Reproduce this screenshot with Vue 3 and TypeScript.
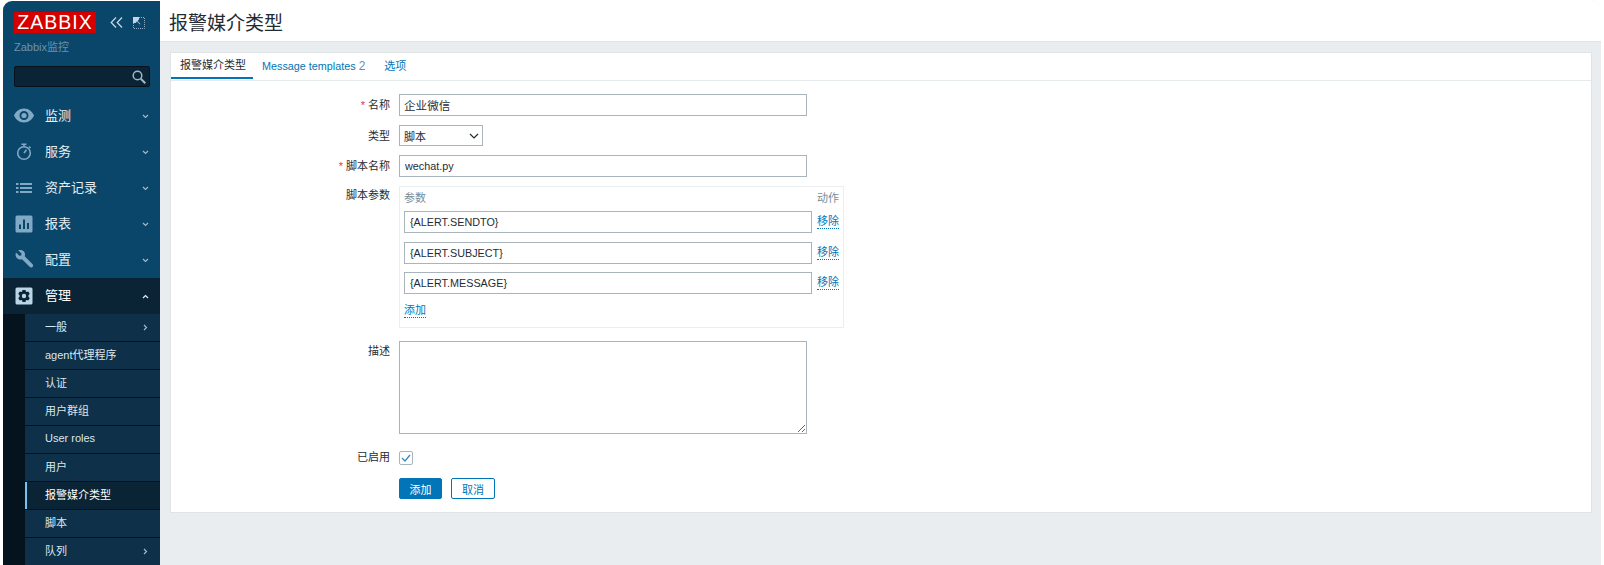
<script setup lang="ts">
const mainMenu = [
  { label: '监测', icon: 'eye' },
  { label: '服务', icon: 'clock' },
  { label: '资产记录', icon: 'list' },
  { label: '报表', icon: 'chart' },
  { label: '配置', icon: 'wrench' },
]
const subMenu = [
  { label: '一般', arrow: true },
  { label: 'agent代理程序' },
  { label: '认证' },
  { label: '用户群组' },
  { label: 'User roles' },
  { label: '用户' },
  { label: '报警媒介类型', active: true },
  { label: '脚本' },
  { label: '队列', arrow: true },
]
const params = ['{ALERT.SENDTO}', '{ALERT.SUBJECT}', '{ALERT.MESSAGE}']
</script>

<template>
  <div class="window">
    <aside class="sidebar">
      <div class="brand">
        <span class="logo">ZABBIX</span>
        <svg class="ctl" width="13" height="11" viewBox="0 0 13 11" fill="none" stroke="#c3d6e3" stroke-width="1.300">
          <path d="M6 .5 1.200 5.500 6 10.500M12 .5 7.200 5.500l4.800 5" />
        </svg>
        <svg class="ctl ctl2" width="12" height="12" viewBox="0 0 12 12" fill="none">
          <path d="M6 .5h5.500v11H.5V6" stroke="#8fb0c6" stroke-dasharray="1 1" />
          <path d="M0 0h6v2.500L4.500 4l3 3L7 7.500 4 4.500 2.500 6H0z" fill="#c3d6e3" />
        </svg>
      </div>
      <div class="server">Zabbix监控</div>
      <div class="search">
        <svg width="14" height="14" viewBox="0 0 14 14" fill="none" stroke="#9fb6c6" stroke-width="1.500">
          <circle cx="5.500" cy="5.500" r="4.300" />
          <path d="m8.800 8.800 4.500 4.500" stroke-width="2" />
        </svg>
      </div>
      <nav class="menu">
        <div v-for="m in mainMenu" :key="m.label" class="item">
          <span class="icon">
            <svg width="22" height="22" viewBox="0 0 22 22">
              <template v-if="m.icon === 'eye'">
                <path fill-rule="evenodd" fill="#7fa9c5" d="M11 3.500C6 3.500 2.300 7 1 10.500 2.300 14 6 17.500 11 17.500S19.700 14 21 10.500C19.700 7 16 3.500 11 3.500zM11 6a4.500 4.500 0 1 1 0 9 4.500 4.500 0 0 1 0-9z" />
                <circle cx="11" cy="10.500" r="2.600" fill="#7fa9c5" />
              </template>
              <template v-else-if="m.icon === 'clock'">
                <circle cx="11" cy="12" r="6.300" fill="none" stroke="#7fa9c5" stroke-width="1.600" />
                <path d="M8.500 3.200h5M11 3.200v2.500M11 12l2.500-3.200M16 5.500l1.500 1.500" fill="none" stroke="#7fa9c5" stroke-width="1.600" />
              </template>
              <template v-else-if="m.icon === 'list'">
                <path d="M3 6h2.500v2H3zM3 10h2.500v2H3zM3 14h2.500v2H3zM7 6h12v2H7zM7 10h12v2H7zM7 14h12v2H7z" fill="#7fa9c5" />
              </template>
              <template v-else-if="m.icon === 'chart'">
                <path fill-rule="evenodd" fill="#7fa9c5" d="M4 2.500h14A1.500 1.500 0 0 1 19.500 4v14a1.500 1.500 0 0 1-1.500 1.500H4A1.500 1.500 0 0 1 2.500 18V4A1.500 1.500 0 0 1 4 2.500zM6 11.500v4.500h2v-4.500zM10 6.500V16h2V6.500zM14 10v6h2v-6z" />
              </template>
              <template v-else>
                <path fill="#7fa9c5" d="M3 3.500 6.300 6.800l1.900-.3.300-1.900L5.200 1.300C7.300.5 9.700 1 11 2.600c1.100 1.400 1.300 3.100.7 4.700l7.700 7.700c.9.900.9 2.100.1 2.900-.8.800-2 .8-2.900-.1L9 10.200C7.300 10.800 5.400 10.500 4.100 9.300 2.600 7.800 2.200 5.600 3 3.500z" />
              </template>
            </svg>
          </span>
          <span class="label">{{ m.label }}</span>
          <svg class="chev" width="7" height="5" viewBox="0 0 7 5" fill="none" stroke="#9fbbce" stroke-width="1.200"><path d="m1 1 2.500 2.500L6 1" /></svg>
        </div>
        <div class="item open">
          <span class="icon">
            <svg width="22" height="22" viewBox="0 0 22 22">
              <path fill-rule="evenodd" fill="#bcd5e6" d="M4 2.500h14A1.500 1.500 0 0 1 19.500 4v14a1.500 1.500 0 0 1-1.500 1.500H4A1.500 1.500 0 0 1 2.500 18V4A1.500 1.500 0 0 1 4 2.500zM9.500 5l-.3 1.500-1 .5-1.500-.6-1.500 2.500 1.300 1v2.200l-1.300 1 1.500 2.500 1.500-.6 1 .5.300 1.500h3l.3-1.500 1-.5 1.500.6 1.500-2.500-1.300-1V9.900l1.300-1-1.500-2.500-1.500.6-1-.5L12.500 5zM11 8.800a2.200 2.200 0 1 1 0 4.400 2.200 2.200 0 0 1 0-4.400z" />
            </svg>
          </span>
          <span class="label">管理</span>
          <svg class="chev" width="7" height="5" viewBox="0 0 7 5" fill="none" stroke="#e4eef5" stroke-width="1.200"><path d="M1 4 3.500 1.500 6 4" /></svg>
        </div>
        <div class="sub">
          <div v-for="s in subMenu" :key="s.label" class="sub-item" :class="{ current: s.active }">
            <span class="sub-text">{{ s.label }}</span>
            <svg v-if="s.arrow" width="5" height="7" viewBox="0 0 5 7" fill="none" stroke="#9fbbce" stroke-width="1.200"><path d="m1 1 2.500 2.500L1 6" /></svg>
          </div>
        </div>
      </nav>
    </aside>

    <main class="main">
      <header class="head"><h1>报警媒介类型</h1></header>
      <section class="card">
        <div class="tabs">
          <a class="tab on">报警媒介类型</a>
          <a class="tab latin">Message templates <em>2</em></a>
          <a class="tab">选项</a>
        </div>
        <form class="form" @submit.prevent>
          <label class="lab"><i>*</i> 名称</label>
          <input class="field wide cjk" value="企业微信" />

          <label class="lab">类型</label>
          <div class="field select">
            <span>脚本</span>
            <svg width="10" height="6" viewBox="0 0 10 6" fill="none" stroke="#1f2c33" stroke-width="1.200"><path d="m1 1 4 4 4-4" /></svg>
          </div>

          <label class="lab"><i>*</i> 脚本名称</label>
          <input class="field wide" value="wechat.py" />

          <label class="lab tall">脚本参数</label>
          <div class="params">
            <div class="p-head"><span>参数</span><span>动作</span></div>
            <div v-for="p in params" :key="p" class="p-row">
              <input class="field p-input" :value="p" />
              <a class="dotted">移除</a>
            </div>
            <a class="dotted add">添加</a>
          </div>

          <label class="lab desc">描述</label>
          <textarea class="field area"></textarea>

          <label class="lab short">已启用</label>
          <span class="check">
            <svg width="10" height="8" viewBox="0 0 10 8" fill="none" stroke="#2f8cc4" stroke-width="1.300"><path d="m1 4 3 3 5-6" /></svg>
          </span>

          <span></span>
          <div class="actions">
            <button class="btn primary" type="button">添加</button>
            <button class="btn ghost" type="button">取消</button>
          </div>
        </form>
      </section>
    </main>
  </div>
</template>

<style>
html, body { background: #fff; overflow: hidden; }
</style>

<style scoped>
.window {
  width: 1598px;
  height: 564px;
  margin: 1px 0 0 3px;
  display: flex;
  overflow: hidden;
  border-radius: 9px 9px 0 0;
  font-family: "Liberation Sans", "Noto Sans CJK SC", sans-serif;
  font-size: 11px;
  color: #1f2c33;
}
.sidebar {
  width: 157px;
  flex: none;
  background: #0a466a;
  display: flex;
  flex-direction: column;
}
.sidebar > * { flex: none; }
.brand { display: flex; align-items: flex-start; padding: 11px 0 0 11px; height: 21px; }
.logo {
  width: 82px;
  height: 21px;
  background: #d40000;
  color: #fff;
  font-size: 19.500px;
  line-height: 21px;
  text-align: center;
  letter-spacing: 1px;
}
.ctl { margin: 5px 0 0 14px; }
.ctl2 { margin: 5px 0 0 10px; }
.server { margin: 7px 0 0 11px; color: #6d93ad; font-size: 11px; line-height: 14px; height: 14px; }
.search {
  margin: 12px 0 0 11px;
  width: 136px;
  height: 21px;
  box-sizing: border-box;
  background: #0a2435;
  border: 1px solid #04131d;
  border-radius: 2px;
  display: flex;
  align-items: center;
  justify-content: flex-end;
  padding-right: 3px;
}
.menu { margin-top: 11px; }
.item { height: 36px; display: flex; align-items: center; padding-left: 10px; color: #e4eef5; font-size: 13px; }
.icon { width: 22px; height: 22px; margin-right: 10px; margin-bottom: 1px; }
.icon svg { display: block; }
.label { flex: 1; padding-bottom: 4px; }
.chev { margin-right: 11px; }
.item.open { background: #0a2435; color: #fff; }
.sub { background: #04131d; padding-left: 22px; }
.sub-item {
  height: 27px;
  margin-bottom: 1px;
  background: #0e3048;
  color: #dbe7ef;
  display: flex;
  align-items: center;
  justify-content: space-between;
  padding: 0 12px 0 20px;
  font-size: 11px;
}
.sub-text { padding-bottom: 3px; }
.sub-item.current {
  background: #0a2435;
  color: #fff;
  border-left: 2px solid #76c1f4;
  padding-left: 18px;
}
.main { flex: 1; min-width: 0; background: #e9edf0; }
.head { height: 40px; background: #fff; border-bottom: 1px solid #dfe4e7; display: flex; align-items: center; padding-left: 9px; }
h1 { margin: 0; font-size: 19px; font-weight: 400; color: #1f2c33; }
.card {
  margin: 10px 9px 0 10px;
  background: #fff;
  border: 1px solid #dfe4e7;
  height: 461px;
  box-sizing: border-box;
}
.tabs { display: flex; height: 27px; border-bottom: 1px solid #e4e9ec; }
.tab { padding: 0 9px; height: 26px; line-height: 26px; color: #0275b8; box-sizing: border-box; font-size: 11px; }
.latin { font-size: 10.800px; padding-right: 10px; }
.tab em { font-style: normal; color: #768d99; font-size: 12px; }
.tab.on { color: #1f2c33; border-bottom: 2px solid #0275b8; padding: 0 7px 0 9px; line-height: 25px; }
.form {
  display: grid;
  grid-template-columns: 219px 1fr;
  column-gap: 9px;
  padding-top: 13px;
  align-items: start;
}
.lab { text-align: right; height: 21px; line-height: 22px; }
.lab.tall { line-height: 18px; }
.lab.desc { line-height: 20px; }
.lab.short { line-height: 12px; }
.lab i { color: #e33734; font-style: normal; }
.field {
  box-sizing: border-box;
  border: 1px solid #a9b5bc;
  background: #fff;
  color: #1f2c33;
  font: inherit;
  padding: 0 5px;
  margin: 0;
  outline: none;
  border-radius: 0;
  display: block;
}
.wide { width: 408px; height: 22px; margin-bottom: 9px; font-size: 10.800px; }
.wide.cjk { font-size: 11.600px; padding-left: 4px; }
.select {
  width: 84px;
  height: 21px;
  margin-bottom: 9px;
  display: flex;
  align-items: center;
  justify-content: space-between;
  padding: 0 3px 0 4px;
}
.params {
  width: 445px;
  height: 142px;
  box-sizing: border-box;
  border: 1px solid #ebeef0;
  padding: 4px 4px 0;
  margin-bottom: 13px;
}
.p-head { display: flex; justify-content: space-between; color: #768d99; height: 20px; line-height: 14px; }
.p-row { display: flex; gap: 5px; height: 30.500px; }
.p-input { width: 408px; height: 22px; font-size: 10.800px; }
.dotted { color: #0275b8; border-bottom: 1px dotted #0275b8; height: 14px; line-height: 15px; margin-top: 3px; }
.add { display: inline-block; margin-top: 0; }
.area { width: 408px; height: 93px; margin-bottom: 17px; }
.check {
  width: 14px;
  height: 14px;
  box-sizing: border-box;
  border: 1px solid #a9b5bc;
  border-radius: 2px;
  display: flex;
  align-items: center;
  justify-content: center;
  margin-bottom: 13px;
}
.actions { display: flex; gap: 9px; }
.btn { height: 21px; font: inherit; border-radius: 2px; padding: 0; }
.primary { width: 43px; background: #0275b8; border: 1px solid #0275b8; color: #fff; }
.ghost { width: 44px; background: #fff; border: 1px solid #0275b8; color: #0275b8; }
</style>
